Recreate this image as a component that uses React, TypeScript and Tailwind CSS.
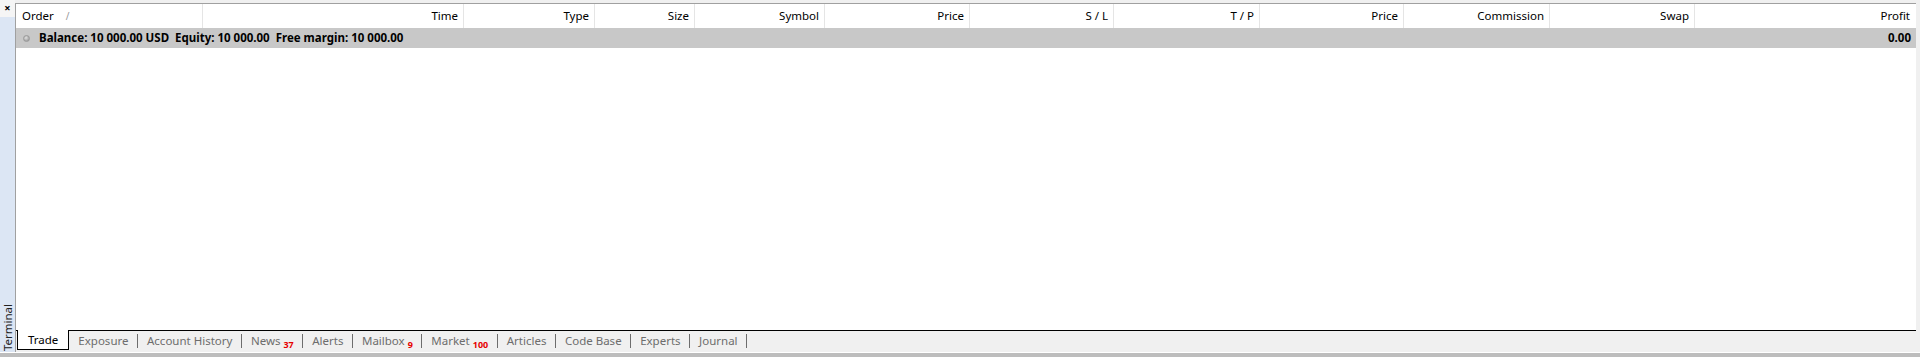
import React from 'react';

const columns = [
  { name: 'Order', w: 'w-[187px]', left: true },
  { name: 'Time', w: 'w-[261px]' },
  { name: 'Type', w: 'w-[131px]' },
  { name: 'Size', w: 'w-[100px]' },
  { name: 'Symbol', w: 'w-[130px]' },
  { name: 'Price', w: 'w-[145px]' },
  { name: 'S / L', w: 'w-[144px]' },
  { name: 'T / P', w: 'w-[146px]' },
  { name: 'Price', w: 'w-[144px]' },
  { name: 'Commission', w: 'w-[146px]' },
  { name: 'Swap', w: 'w-[145px]' },
  { name: 'Profit', w: 'w-[220px]', last: true },
];

const tabs: { name: string; badge?: string }[] = [
  { name: 'Exposure' },
  { name: 'Account History' },
  { name: 'News', badge: '37' },
  { name: 'Alerts' },
  { name: 'Mailbox', badge: '9' },
  { name: 'Market', badge: '100' },
  { name: 'Articles' },
  { name: 'Code Base' },
  { name: 'Experts' },
  { name: 'Journal' },
];

export default function App() {
  return (
    <div className="w-[1920px] h-[357px] flex flex-col bg-[#f0f0f0] text-[11.5px] text-black font-['Noto_Sans','Open_Sans',sans-serif] overflow-hidden">
      <div className="flex h-[352px]">
        {/* Side strip */}
        <div className="w-[15px] flex flex-col">
          <div className="h-[17px] bg-[#f5f5f5] flex justify-center pt-[2px]">
            <span className="text-[11px] font-bold leading-[12px]">×</span>
          </div>
          <div className="flex-1 bg-[#dce6f4] flex flex-col justify-end items-center pb-[1px]">
            <span className="[writing-mode:vertical-rl] rotate-180 text-[11.5px] leading-[13px] text-[#222]">Terminal</span>
          </div>
        </div>

        {/* Main panel */}
        <div className="flex-1 flex flex-col pt-[3px] pr-[4px]">
          <div className="flex-1 flex flex-col bg-white border-t border-l border-[#a0a0a0]">
            {/* Header */}
            <div className="flex h-[24px] items-center">
              {columns.map((c, i) => (
                <div
                  key={i}
                  className={`${c.w} h-full flex items-center ${c.last ? '' : 'border-r border-[#e5e5e5]'} ${c.left ? 'justify-start pl-[6px]' : 'justify-end pr-[5px]'}`}
                >
                  {c.name}
                  {c.left && <span className="ml-[12px] text-[10px] text-[#999]">/</span>}
                </div>
              ))}
            </div>

            {/* Balance row */}
            <div className="h-[20px] bg-[#c8c8c8] flex items-center font-bold pr-[5px]">
              <span className="ml-[7px] mr-[9px] w-[7px] h-[7px] rounded-full bg-[radial-gradient(circle_at_40%_35%,#e0e0e0,#8a8a8a)] border border-[#9a9a9a]" />
              <span className="whitespace-pre">Balance: 10 000.00 USD  Equity: 10 000.00  Free margin: 10 000.00</span>
              <span className="ml-auto">0.00</span>
            </div>

            <div className="flex-1" />

            {/* Tab bar */}
            <div className="h-[22px] bg-[#f0f0f0] border-t border-black flex items-start">
              <div className="ml-[1px] -mt-[1px] h-[20px] px-[10px] bg-white border-x border-b border-black flex items-center">
                Trade
              </div>
              {tabs.map((t, i) => (
                <React.Fragment key={i}>
                  <div className={`h-[19px] flex items-center text-[#6d6d6d] ${i === 0 ? 'pl-[9px]' : 'pl-[9px]'} pr-[8.5px]`}>
                    <span>{t.name}</span>
                    {t.badge && (
                      <span className="ml-[3px] relative top-[4px] text-[9px] font-bold text-[#e60000] leading-none">{t.badge}</span>
                    )}
                  </div>
                  <span className="mt-[3px] w-px h-[14px] bg-[#6d6d6d]" />
                </React.Fragment>
              ))}
            </div>
          </div>
        </div>
      </div>
      <div className="h-px bg-white" />
      <div className="flex-1 bg-[#bdbdbd]" />
    </div>
  );
}
